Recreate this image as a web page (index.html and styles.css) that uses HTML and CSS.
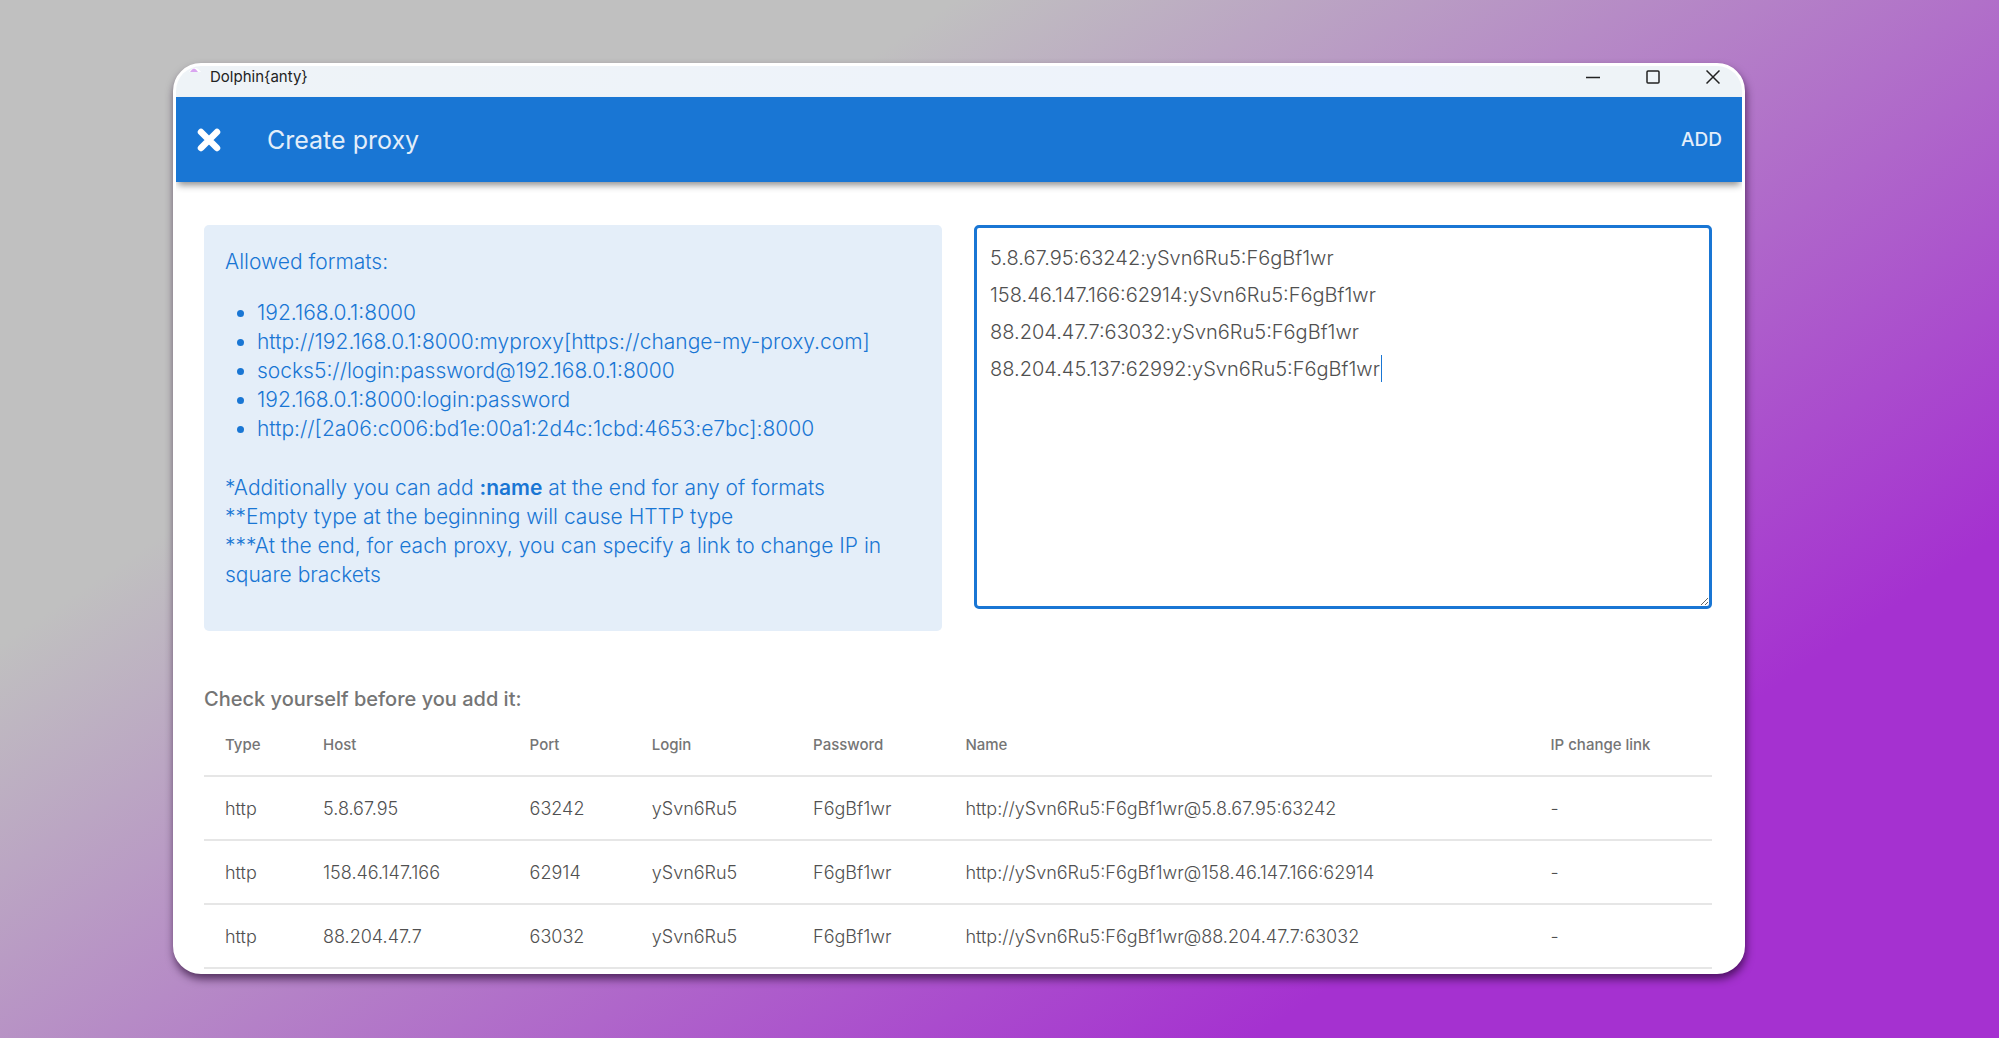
FILE: index.html
```html
<!DOCTYPE html>
<html lang="en">
<head>
<meta charset="utf-8">
<meta name="viewport" content="width=device-width, initial-scale=1">
<title>Dolphin{anty}</title>
<link rel="stylesheet" href="styles.css">
</head>
<body>
<div class="window">
  <header class="titlebar">
    <svg class="logo" viewBox="0 0 12 8" aria-hidden="true"><path class="logo-halo" d="M0 6Q6-2 12 6Z"/><path class="logo-fin" d="M1 6Q5-1 9 6Z"/></svg>
    <span class="app-name">Dolphin{anty}</span>
    <div class="controls">
      <button type="button" aria-label="Minimize"><svg viewBox="0 0 14 14"><path d="M0 7.5H14"/></svg></button>
      <button type="button" aria-label="Maximize"><svg viewBox="0 0 14 14"><rect x="1" y="1" width="12" height="12" rx="1"/></svg></button>
      <button type="button" aria-label="Close window"><svg viewBox="0 0 14 14"><path d="M.5.5l13 13M13.5.5l-13 13"/></svg></button>
    </div>
  </header>

  <div class="appbar">
    <button class="dismiss" type="button" aria-label="Close"><svg viewBox="0 0 24 24"><path d="M4 4l16 16M20 4L4 20"/></svg></button>
    <h1>Create proxy</h1>
    <button class="add" type="button">ADD</button>
  </div>

  <main>
    <div class="columns">
      <section class="formats">
        <p>Allowed formats:</p>
        <ul>
          <li>192.168.0.1:8000</li>
          <li>http://192.168.0.1:8000:myproxy[https://change-my-proxy.com]</li>
          <li>socks5://login:password@192.168.0.1:8000</li>
          <li>192.168.0.1:8000:login:password</li>
          <li>http://[2a06:c006:bd1e:00a1:2d4c:1cbd:4653:e7bc]:8000</li>
        </ul>
        <p>*Additionally you can add <b>:name</b> at the end for any of formats<br>
        **Empty type at the beginning will cause HTTP type<br>
        ***At the end, for each proxy, you can specify a link to change IP in square brackets</p>
      </section>
      <div class="entry">
        <textarea aria-label="Proxies" spellcheck="false">5.8.67.95:63242:ySvn6Ru5:F6gBf1wr
158.46.147.166:62914:ySvn6Ru5:F6gBf1wr
88.204.47.7:63032:ySvn6Ru5:F6gBf1wr
88.204.45.137:62992:ySvn6Ru5:F6gBf1wr</textarea>
        <span class="caret"></span>
      </div>
    </div>

    <h2 id="check">Check yourself before you add it:</h2>
    <table aria-labelledby="check">
      <colgroup><col class="c-type"><col class="c-host"><col class="c-port"><col class="c-login"><col class="c-pass"><col class="c-name"><col class="c-link"></colgroup>
      <thead>
        <tr><th>Type</th><th>Host</th><th>Port</th><th>Login</th><th>Password</th><th>Name</th><th>IP change link</th></tr>
      </thead>
      <tbody>
        <tr><td>http</td><td>5.8.67.95</td><td>63242</td><td>ySvn6Ru5</td><td>F6gBf1wr</td><td>http://ySvn6Ru5:F6gBf1wr@5.8.67.95:63242</td><td>-</td></tr>
        <tr><td>http</td><td>158.46.147.166</td><td>62914</td><td>ySvn6Ru5</td><td>F6gBf1wr</td><td>http://ySvn6Ru5:F6gBf1wr@158.46.147.166:62914</td><td>-</td></tr>
        <tr><td>http</td><td>88.204.47.7</td><td>63032</td><td>ySvn6Ru5</td><td>F6gBf1wr</td><td>http://ySvn6Ru5:F6gBf1wr@88.204.47.7:63032</td><td>-</td></tr>
      </tbody>
    </table>
  </main>
</div>
</body>
</html>
```
FILE: styles.css
```css
* {
  box-sizing: border-box;
}

body {
  margin: 0;
  min-height: 100vh;
  padding: 63px 254px 64px 173px;
  background: linear-gradient(146deg, #c0c0c0 27%, #a531d0 79%) no-repeat;
  font-family: Inter, "Liberation Sans", sans-serif;
  color: #505050;
}

button {
  padding: 0;
  border: 0;
  background: none;
  font: inherit;
  color: inherit;
  display: flex;
  align-items: center;
  justify-content: center;
}

.window {
  border: 3px solid #fff;
  border-radius: 28px;
  background: #fff;
  overflow: hidden;
  box-shadow: 1px 5px 8px rgba(30, 0, 40, 0.65);
}

/* Title bar */
.titlebar {
  height: 31px;
  padding: 0 22px 10px 13px;
  display: flex;
  align-items: center;
  background: linear-gradient(90deg, #eef3f7, #eef3fc 78%, #eef3f7 90%);
  color: #222;
}

.logo {
  width: 12px;
  height: 8px;
  margin-right: 9px;
  align-self: flex-start;
}

.logo-halo {
  fill: #fff;
}

.logo-fin {
  fill: #d9a5f0;
}

.app-name {
  font-size: 15px;
  line-height: 20px;
}

.controls {
  margin-left: auto;
  display: flex;
  gap: 46px;
}

.controls svg {
  width: 14px;
  height: 14px;
  display: block;
  fill: none;
  stroke: #222;
  stroke-width: 1.5;
}

/* App bar */
.appbar {
  height: 85px;
  padding: 0 20px 0 21px;
  display: flex;
  align-items: center;
  background: #1976d4;
  color: #e3eefa;
  box-shadow: 0 5px 7px -2px rgba(0, 0, 0, 0.45);
}

.dismiss svg {
  width: 24px;
  height: 24px;
  fill: none;
  stroke: #fff;
  stroke-width: 6.5;
  stroke-linecap: round;
}

.appbar h1 {
  margin: 0 0 0 46px;
  font-size: 25px;
  font-weight: 400;
}

.add {
  margin-left: auto;
  font-size: 19px;
  font-weight: 500;
}

/* Content */
main {
  padding: 43px 30px 2px 28px;
}

.columns {
  display: grid;
  grid-template-columns: 1fr 1fr;
  gap: 32px;
  align-items: start;
}

.formats {
  padding: 22px 21px 42px;
  border-radius: 5px;
  background: #e4eef9;
  color: #1976d4;
  font-size: 21px;
  font-weight: 300;
  line-height: 29px;
}

.formats p {
  margin: 0;
}

.formats ul {
  margin: 22px 0 30px;
  padding-left: 32px;
}

.formats b {
  font-weight: 600;
}

.entry {
  position: relative;
}

textarea {
  display: block;
  width: 100%;
  height: 384px;
  padding: 12px 13px;
  border: 3px solid #1976d4;
  border-radius: 5px;
  outline: 0;
  resize: vertical;
  background: #fff;
  color: #505050;
  font: 300 20px/37px Inter, "Liberation Sans", sans-serif;
}

.caret {
  position: absolute;
  left: 407px;
  top: 130px;
  width: 1px;
  height: 27px;
  background: #1976d4;
}

h2 {
  margin: 54px 0 0;
  font-size: 20px;
  font-weight: 500;
  line-height: 28px;
  color: #757575;
}

table {
  width: 100%;
  table-layout: fixed;
  border-collapse: collapse;
  text-align: left;
}

.c-type { width: 6.5%; }
.c-host { width: 13.7%; }
.c-port { width: 8.1%; }
.c-login { width: 10.7%; }
.c-pass { width: 10.1%; }
.c-name { width: 38.8%; }
.c-link { width: 12.1%; }

th,
td {
  height: 64px;
  padding: 0 0 0 21px;
  border-bottom: 2px solid #e6e6e6;
  font-size: 18px;
  font-weight: 300;
  white-space: nowrap;
}

th {
  height: 63px;
  font-size: 15px;
  font-weight: 500;
  color: #757575;
}
```
